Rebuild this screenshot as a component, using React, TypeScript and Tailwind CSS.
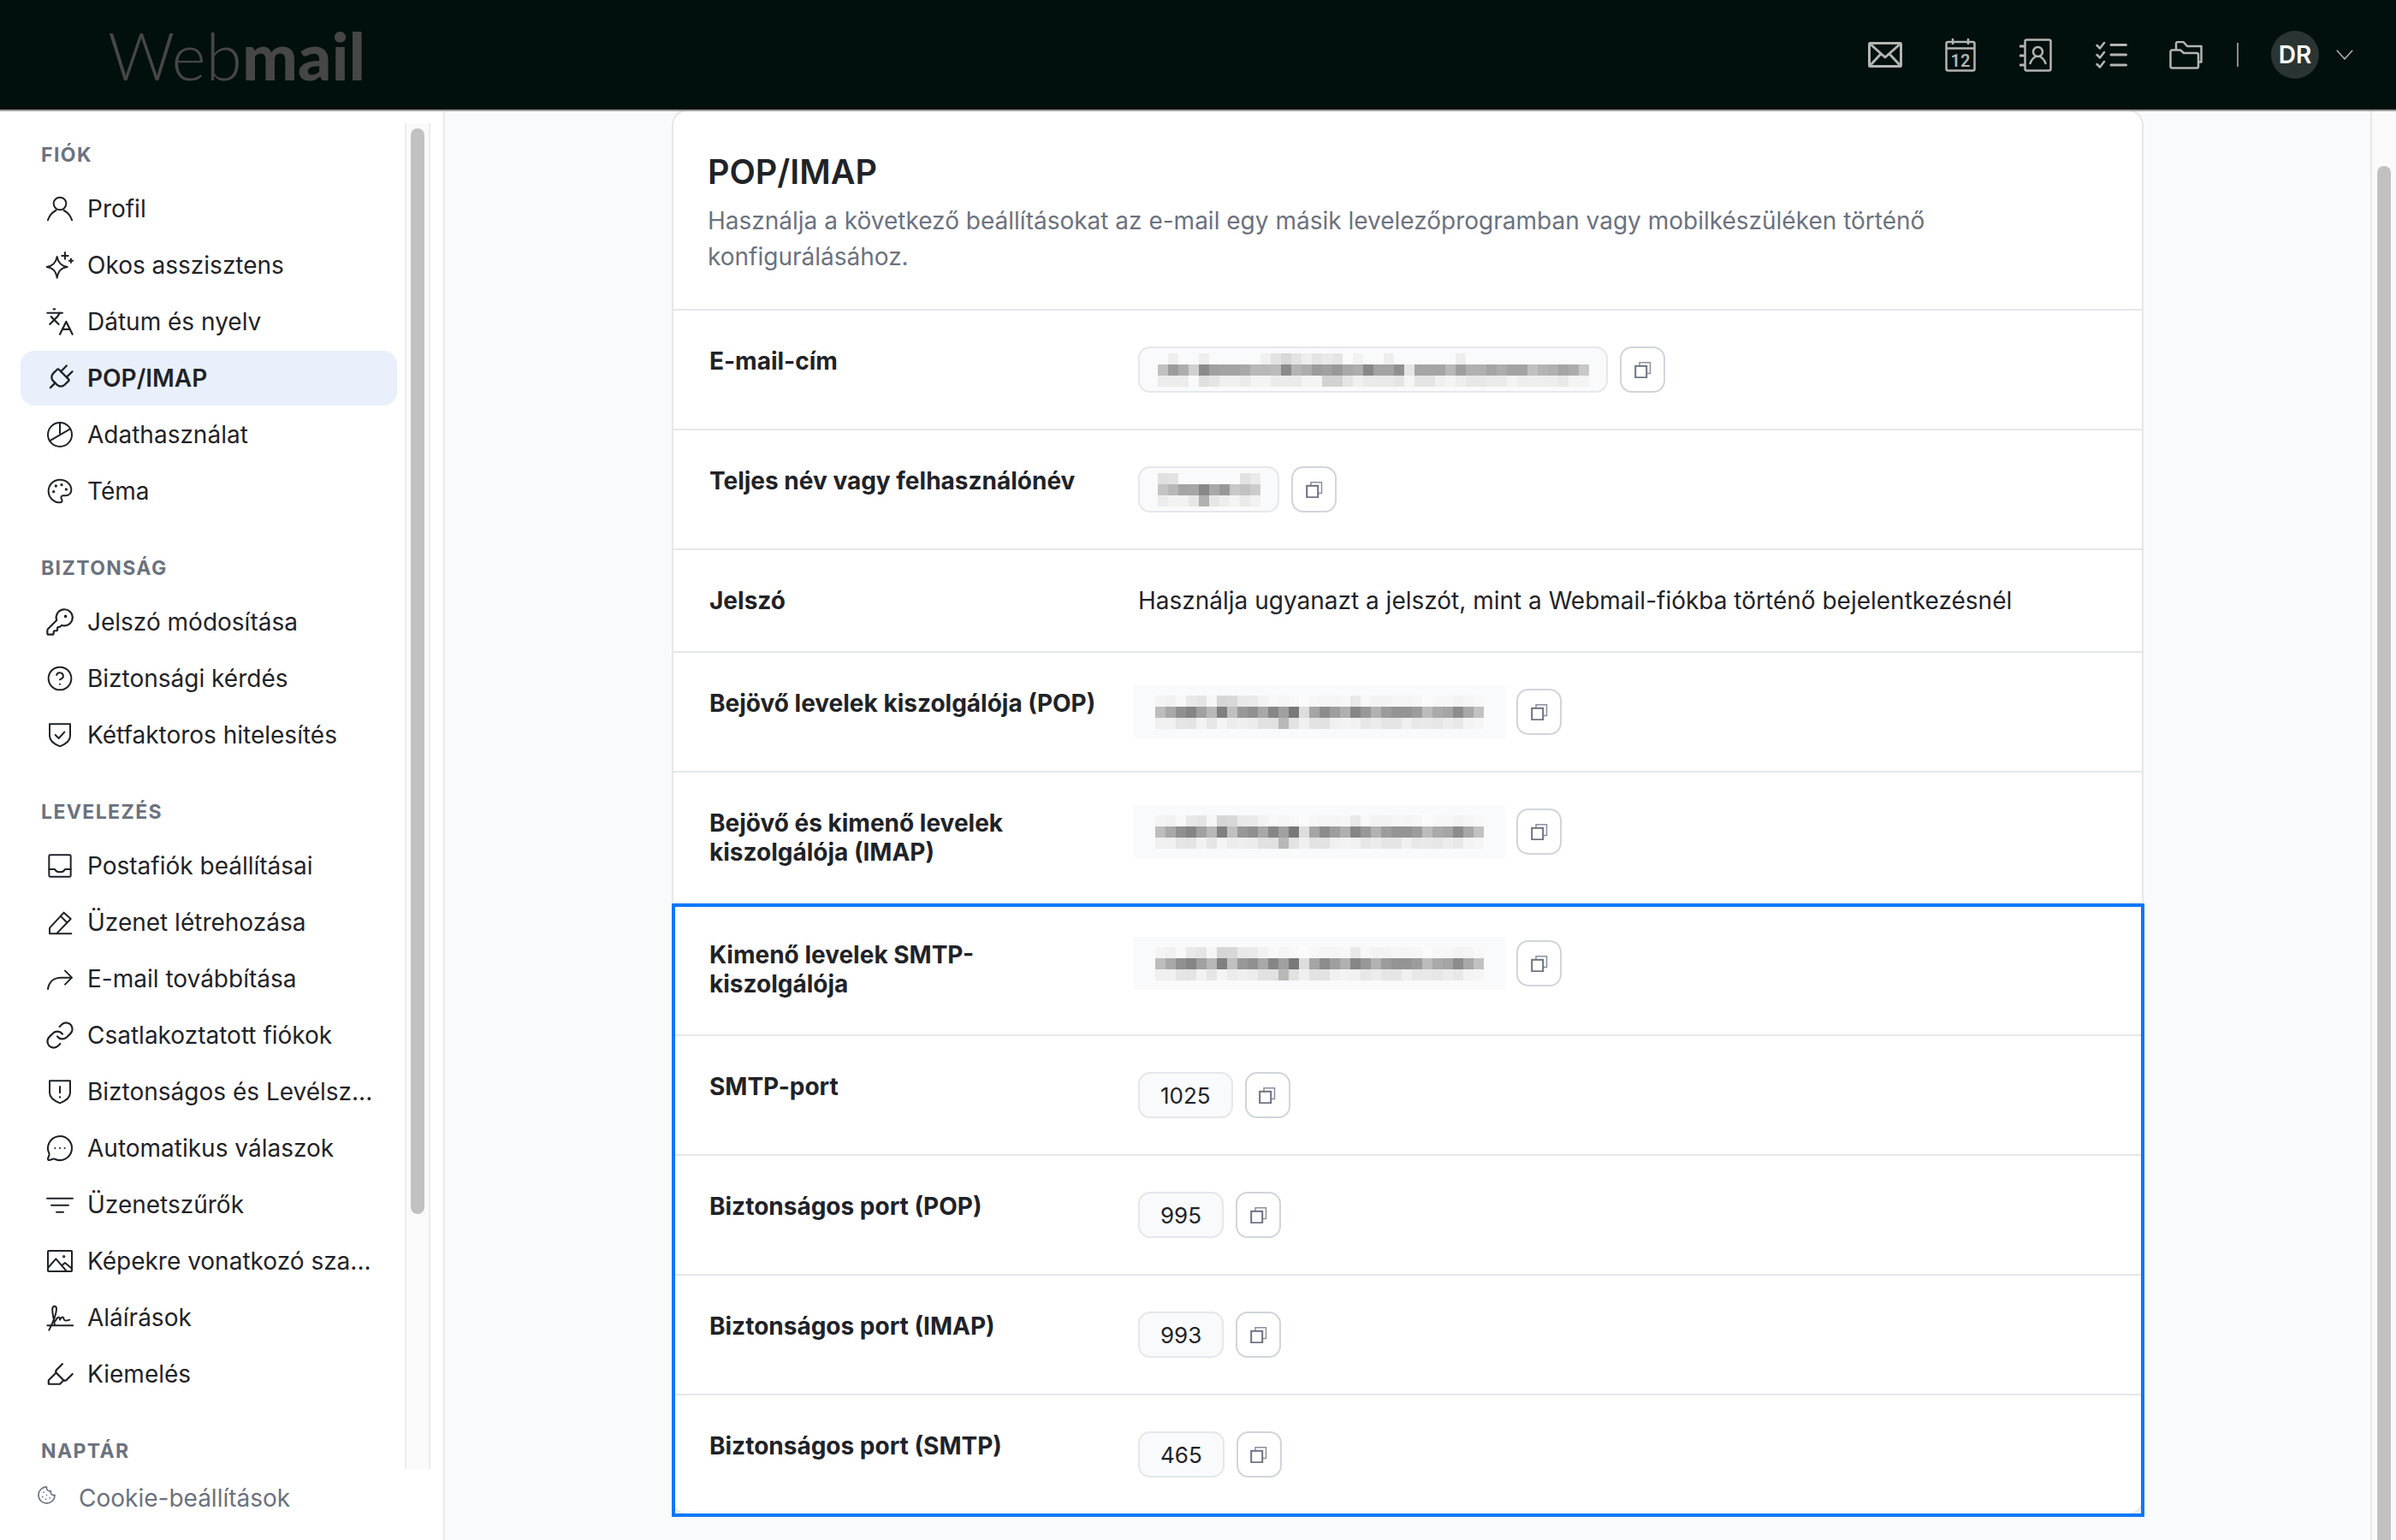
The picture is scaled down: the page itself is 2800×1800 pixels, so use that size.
import React from "react";
import { Languages, Plug, Palette, KeyRound, CircleHelp, Link, MessageCircleMore, Highlighter, Cookie } from "lucide-react";

const S = ({ children }: { children: React.ReactNode }) => (
  <svg width="32" height="32" viewBox="0 0 24 24" fill="none" stroke="currentColor" strokeWidth="1.5" strokeLinecap="round" strokeLinejoin="round">{children}</svg>
);
const L = ({ I, className }: { I: any; className?: string }) => <I size={32} strokeWidth={1.5} className={className} />;

const icons: Record<string, React.ReactNode> = {
  user: <S><circle cx="12" cy="7.5" r="5.5" /><path d="M1.5 22c1.5-5 5-7.5 7-8.5M22.5 22c-1.5-5-5-7.5-7-8.5" /></S>,
  spark: <S><path d="M9.500 4.500c1 5.500 3.500 8 9 9-5.500 1-8 3.500-9 9.500-1-6-3.500-8.500-9-9.500 5.500-1 8-3.500 9-9Z" /><path d="M16.500 .8v5.700M13.700 3.700h5.600M21.700 6.300v3.400M20 8h3.400" /></S>,
  lang: <L I={Languages} className="scale-110" />,
  plug: <L I={Plug} className="rotate-45 scale-[1.18]" />,
  pie: <S><circle cx="12" cy="12" r="10.500" /><path d="M12 1.500V11M3 17.500 21 7" /></S>,
  palette: <L I={Palette} />,
  key: <L I={KeyRound} className="scale-110" />,
  help: <L I={CircleHelp} />,
  shieldCheck: <S><path d="M3 2.500h18V13c0 4.500-5 7.500-9 9-4-1.500-9-4.500-9-9Z" /><path d="m8 12 3 3 5-5.500" /></S>,
  inbox: <S><rect x="2.500" y="2.500" width="19" height="19" rx="1" /><path d="M2.500 15h5c1 2 2.500 2.500 4.500 2.500s3.500-.5 4.500-2.500h5" /></S>,
  pencil: <S><path d="M3 22h19M3 22v-5L15.500 3.500 21.500 9 9 22M12.500 6.500l5.500 5.500" /></S>,
  forward: <S><path d="M1.500 21c1-6.500 5.500-10 11.500-10h9.500M16.500 5l6 6-6 6" /></S>,
  link: <L I={Link} className="scale-110" />,
  shieldAlert: <S><path d="M3 2.500h18V13c0 4.500-5 7.500-9 9-4-1.500-9-4.500-9-9Z" /><path d="M12 7.500v5.500M12 16.500v.5" /></S>,
  chat: <L I={MessageCircleMore} className="scale-105" />,
  filter: <S><path d="M.8 6.500h22.400M4.500 12.500h15M9 18.500h6" /></S>,
  image: <S><rect x="1.500" y="3" width="21" height="18" rx=".5" /><path d="M1.500 18 8.500 10l9.500 11M13.500 16l3-2.500 6 5" /><circle cx="15.500" cy="8" r=".5" /></S>,
  sign: <S><path d="M1 19h22.500M2.500 23C5 18 9 9 9 4.500 9 1.500 6 1 5.500 4 5 8 7 14 7.500 19" /><path d="M8 15c2-4 4-4 4-1 1.500-3 3-3 3.500-.5.5 1.500 2 1.500 5 .5" /></S>,
  high: <L I={Highlighter} className="scale-110" />,
};

const groups: { title: string; items: [string, string, boolean?][] }[] = [
  { title: "FIÓK", items: [["user", "Profil"], ["spark", "Okos asszisztens"], ["lang", "Dátum és nyelv"], ["plug", "POP/IMAP", true], ["pie", "Adathasználat"], ["palette", "Téma"]] },
  { title: "BIZTONSÁG", items: [["key", "Jelszó módosítása"], ["help", "Biztonsági kérdés"], ["shieldCheck", "Kétfaktoros hitelesítés"]] },
  { title: "LEVELEZÉS", items: [["inbox", "Postafiók beállításai"], ["pencil", "Üzenet létrehozása"], ["forward", "E-mail továbbítása"], ["link", "Csatlakoztatott fiókok"], ["shieldAlert", "Biztonságos és Levélsz..."], ["chat", "Automatikus válaszok"], ["filter", "Üzenetszűrők"], ["image", "Képekre vonatkozó sza..."], ["sign", "Aláírások"], ["high", "Kiemelés"]] },
  { title: "NAPTÁR", items: [] },
];

function Pixels({ rows, w, h }: { rows: string[]; w: number; h: number }) {
  return (
    <svg width={w * rows[0].split(" ").length} height={h * rows.length} shapeRendering="crispEdges" className="block shrink-0">
      {rows.map((r, y) =>
        r.split(" ").map((v, x) => (v === "--" ? null : <rect key={x} x={x * w} y={y * h} width={w} height={h} fill={`#${v}${v}${v}`} />))
      )}
    </svg>
  );
}

const emailPx = [
  "-- ee -- -- ee -- -- -- -- -- f0 e3 d8 e3 ee e5 ea e5 -- f2 -- -- ee -- -- -- -- -- -- ee -- -- -- -- -- -- -- -- -- -- -- --",
  "c0 9c ad d0 8a a0 a3 a3 a8 b8 b8 bc 8a b4 ad 9c a0 98 a8 ad 88 a3 a3 90 e5 a5 a5 a5 b8 9f b0 b0 a5 ad a3 a3 c0 b4 b0 a5 ac c8",
  "ec ec ec -- e0 e5 f0 f0 eb f4 f4 eb eb eb f4 f4 d2 d2 e5 f0 ea ea ea e5 f5 e5 e5 f0 f4 ee e7 e7 eb eb f4 ee ee ee ee e8 f4 f4",
];
const namePx = [
  "e0 e3 -- -- -- -- -- -- e2 ea",
  "c4 b8 a4 a6 88 a8 98 c8 c2 cc",
  "ec f2 f2 e6 b0 e6 ee f4 ea f2",
];
const serverPx = [
  "f4 f1 f8 e9 e5 f6 d6 d8 e9 ea f2 f8 f5 f8 fb f7 f5 f5 f7 e9 f8 f3 f3 f6 f5 f6 fb f7 f7 f3 f5 f8",
  "bd a8 90 85 a0 b8 80 c0 98 90 a8 86 a0 78 dd a5 8c 9e b0 86 98 b2 9c 94 94 9c bc aa a5 8c a8 c2",
  "f0 f0 e5 e4 f2 e6 f5 ec ef ec e1 e1 b8 e2 f0 e3 e2 f0 f3 f1 e7 ec e5 e5 f0 e8 e9 e6 ec e8 f4 f5",
];

function CopyBtn() {
  return (
    <button className="flex h-[54px] w-[53px] shrink-0 items-center justify-center rounded-[14px] border-2 border-[#d1d5db] bg-white">
      <svg width="20" height="20" viewBox="0 0 20 20" fill="none">
        <path d="M6 5.500V1.800h12.500v12.700H14.500" stroke="#8a90a0" strokeWidth="1.500" />
        <rect x="1.200" y="5.800" width="13" height="13.500" stroke="#6b7280" strokeWidth="2" />
      </svg>
    </button>
  );
}

function Chip({ children, w }: { children: React.ReactNode; w?: string }) {
  return (
    <div className={`flex h-[54px] shrink-0 items-center justify-center rounded-[14px] border-2 border-[#e5e7eb] bg-[#f9fafb] text-[26px] text-[#1f2328] ${w ?? "px-[24px]"}`}>
      {children}
    </div>
  );
}

function Row({ label, last, children }: { label: React.ReactNode; last?: boolean; children: React.ReactNode }) {
  return (
    <div className={`flex py-[42px] ${last ? "" : "border-b-2 border-[#e5e7eb]"}`}>
      <div className="mr-[41px] box-content w-[460px] shrink-0 pl-[42px] text-[28px] leading-[34px] font-bold text-[#1f2328]">{label}</div>
      {children}
    </div>
  );
}

function ServerValue() {
  return (
    <div className="-ml-[5px] flex items-center gap-[13px] self-start">
      <div className="-my-[4px] flex h-[62px] w-[434px] items-center justify-center bg-[#f9fafb]">
        <Pixels rows={serverPx} w={12} h={13} />
      </div>
      <CopyBtn />
    </div>
  );
}

function Port({ v }: { v: string }) {
  return (
    <div className="flex items-start gap-[14px]">
      <Chip>{v}</Chip>
      <CopyBtn />
    </div>
  );
}

export default function App() {
  return (
    <div className="flex h-screen flex-col overflow-hidden bg-white font-['Inter',sans-serif] text-[#1f2328]">
      <header className="relative z-10 flex h-[130px] shrink-0 items-center border-b-2 border-[#999a99] bg-[#010f0d] pr-[50px] pl-[126px]">
        <div className="font-['Lato',sans-serif] text-[77px] leading-none font-light text-[#464646]">
          Web<span className="font-black">mail</span>
        </div>
        <div className="ml-auto flex items-center text-[#b3b5b4]">
          <div className="flex w-[88px] justify-center">
            <svg width="40" height="30" viewBox="0 0 40 30" fill="none" stroke="currentColor" strokeWidth="3" strokeLinejoin="round">
              <rect x="1.500" y="1.500" width="37" height="27" rx="1" />
              <path d="M1.500 1.500 20 18 38.500 1.500M1.500 28.500 15 14M38.500 28.500 25 14" />
            </svg>
          </div>
          <div className="flex w-[88px] justify-center">
            <svg width="36" height="39" viewBox="0 0 36 39" fill="none" stroke="currentColor" strokeWidth="2.500">
              <rect x="1.500" y="4" width="33" height="33.500" rx="2" />
              <path d="M1.500 11.500h33M9 0v7M27 0v7" />
              <text x="18" y="33" textAnchor="middle" fontSize="20" fontWeight="600" fill="currentColor" stroke="none" fontFamily="Roboto, sans-serif">12</text>
            </svg>
          </div>
          <div className="flex w-[88px] justify-center">
            <svg width="38" height="39" viewBox="0 0 38 39" fill="none" stroke="currentColor" strokeWidth="2.500" strokeLinecap="round">
              <rect x="6.500" y="1.500" width="30" height="36" rx="2" />
              <path d="M1 9h4M1 20h4M1 31h4" strokeWidth="3" />
              <circle cx="21.500" cy="15.500" r="5.500" />
              <path d="M12.500 29c1.500-4 4-6.500 6-7.500M30.500 29c-1.500-4-4-6.500-6-7.500" />
            </svg>
          </div>
          <div className="flex w-[88px] justify-center">
            <svg width="37" height="32" viewBox="0 0 37 32" fill="none" stroke="currentColor" strokeWidth="3" strokeLinecap="round" strokeLinejoin="round">
              <path d="m1.500 5 3.500 3.500L10 2M1.500 16l3.500 3.500L10 13M1.500 27l3.500 3.500L10 24" strokeWidth="2.500" />
              <path d="M18 4.500h17.500M18 16h17.500M18 28h17.500" />
            </svg>
          </div>
          <div className="flex w-[88px] justify-center">
            <svg width="40" height="33" viewBox="0 0 40 33" fill="none" stroke="currentColor" strokeWidth="2.500" strokeLinejoin="round">
              <path d="M1.500 12.500a2 2 0 0 1 2-2H13l4 3.500h15a2 2 0 0 1 2 2V29.500a2 2 0 0 1-2 2H3.500a2 2 0 0 1-2-2Z" />
              <path d="M8 10V3a2 2 0 0 1 2-2h6.500l4.500 5h16.500v18.500H34" />
            </svg>
          </div>
          <div className="ml-[15px] h-[28px] w-[2px] bg-[#8a8c8b]" />
          <div className="ml-[38px] flex h-[56px] w-[56px] items-center justify-center rounded-full bg-[#2a3533] text-[28px] font-semibold text-white">DR</div>
          <svg className="ml-[20px]" width="20" height="12" viewBox="0 0 20 12" fill="none" stroke="currentColor" strokeWidth="1.500">
            <path d="M.8.800 10 11 19.200.800" />
          </svg>
        </div>
      </header>

      <div className="flex min-h-0 flex-1">
        <aside className="flex w-[520px] shrink-0 flex-col border-r-2 border-[#e8eaed] bg-white">
          <div className="mt-[14px] flex min-h-0 flex-1">
            <nav className="flex min-h-0 w-[473px] shrink-0 flex-col gap-[41px] overflow-hidden pt-[20px]">
              {groups.map((g) => (
                <section key={g.title}>
                  <h3 className="mb-[14px] pl-[48px] text-[23px] leading-[34px] font-bold tracking-[1.4px] text-[#6b7280]">{g.title}</h3>
                  <ul className="flex flex-col gap-[2px]">
                    {g.items.map(([ic, label, active]) => (
                      <li
                        key={label}
                        className={`ml-[24px] flex h-[64px] w-[440px] items-center gap-[16px] rounded-[16px] pr-[20px] pl-[30px] text-[28px] whitespace-nowrap text-[#1f2328] ${active ? "bg-[#e9f0fb] font-semibold" : ""}`}
                      >
                        <span className="flex h-[32px] w-[32px] shrink-0 items-center justify-center">{icons[ic]}</span>
                        <span>{label}</span>
                      </li>
                    ))}
                  </ul>
                </section>
              ))}
            </nav>
            <div className="w-[30px] shrink-0 border-x-2 border-[#ececec] bg-[#fafafa] pt-[6px] pl-[5px]">
              <div className="h-[1269px] w-[16px] rounded-full bg-[#c1c1c1]" />
            </div>
          </div>
          <div className="flex h-[83px] shrink-0 items-center gap-[26px] bg-white pb-[16px] pl-[43px] text-[28px] text-[#6b7280]">
            <Cookie size={23} strokeWidth={1.75} className="-mt-[6px]" />
            <span>Cookie-beállítások</span>
          </div>
        </aside>

        <main className="flex min-w-0 flex-1 bg-[#f9fafb]">
          <div className="min-w-0 flex-1 overflow-hidden">
            <div className="mx-auto -mt-[2px] w-[1720px] rounded-[18px] border-2 border-[#e5e7eb] bg-white">
              <div className="border-b-2 border-[#e5e7eb] pt-[47px] pr-[40px] pb-[40px] pl-[40px]">
                <h1 className="text-[39.5px] leading-[48px] font-semibold text-[#1f2328]">POP/IMAP</h1>
                <p className="mt-[12px] max-w-[1450px] text-[28px] leading-[42px] text-[#6b7280]">
                  Használja a következő beállításokat az e-mail egy másik levelezőprogramban vagy mobilkészüléken történő konfigurálásához.
                </p>
              </div>
              <Row label="E-mail-cím">
                <div className="flex items-start gap-[14px]">
                  <Chip w="w-[549px]"><Pixels rows={emailPx} w={12} h={13} /></Chip>
                  <CopyBtn />
                </div>
              </Row>
              <Row label="Teljes név vagy felhasználónév">
                <div className="flex items-start gap-[14px]">
                  <Chip w="w-[165px]"><Pixels rows={namePx} w={12} h={13} /></Chip>
                  <CopyBtn />
                </div>
              </Row>
              <Row label="Jelszó">
                <div className="text-[28px] leading-[34px] text-[#1f2328]">Használja ugyanazt a jelszót, mint a Webmail-fiókba történő bejelentkezésnél</div>
              </Row>
              <Row label="Bejövő levelek kiszolgálója (POP)"><ServerValue /></Row>
              <Row label={<>Bejövő és kimenő levelek<br />kiszolgálója (IMAP)</>}><ServerValue /></Row>
              <div className="relative">
                <Row label={<>Kimenő levelek SMTP-<br />kiszolgálója</>}><ServerValue /></Row>
                <Row label="SMTP-port"><Port v="1025" /></Row>
                <Row label="Biztonságos port (POP)"><Port v="995" /></Row>
                <Row label="Biztonságos port (IMAP)"><Port v="993" /></Row>
                <Row label="Biztonságos port (SMTP)" last><Port v="465" /></Row>
                <div className="pointer-events-none absolute -top-[1px] -right-[3px] -bottom-[4px] -left-[2px] border-4 border-[#0a78fa]" />
              </div>
            </div>
          </div>
          <div className="flex w-[30px] shrink-0 flex-col border-l-2 border-[#e8e8e8] bg-[#fafafa] pt-[64px] pl-[6px]">
            <div className="w-[16px] flex-1 rounded-t-full bg-[#c1c1c1]" />
          </div>
        </main>
      </div>
    </div>
  );
}
